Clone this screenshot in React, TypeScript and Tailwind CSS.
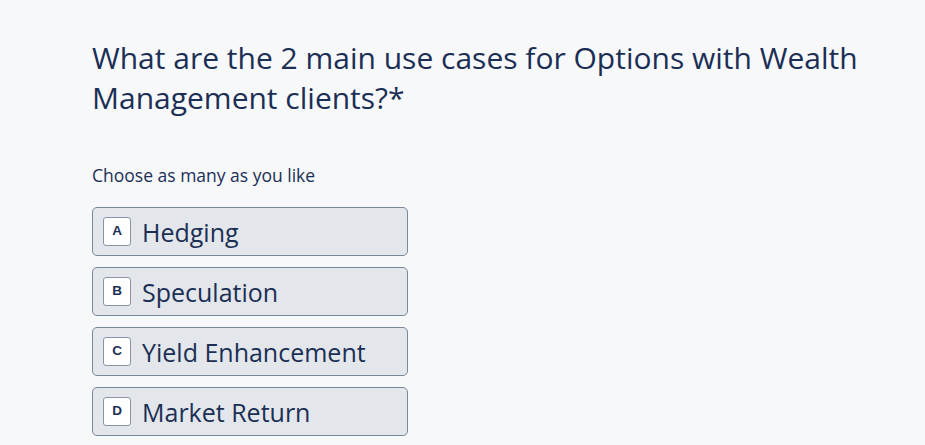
import React from "react";

const options = [
  { key: "A", label: "Hedging" },
  { key: "B", label: "Speculation" },
  { key: "C", label: "Yield Enhancement" },
  { key: "D", label: "Market Return" },
];

export default function App() {
  return (
    <div className="w-[925px] h-[445px] overflow-hidden bg-[#f7f8fa] text-[#1b2f55]" style={{ fontFamily: '"Open Sans", sans-serif' }}>
      <div className="pl-[92px] pr-[40px] pt-[38px]">
        <h1 className="text-[30px] leading-[40px] font-normal">
          What are the 2 main use cases for Options with Wealth Management clients?*
        </h1>
        <p className="mt-[45px] text-[17.5px] leading-[24px]">Choose as many as you like</p>
        <div className="mt-[20px] flex flex-col gap-[11px]">
          {options.map((o) => (
            <div
              key={o.key}
              className="w-[316px] h-[49px] flex items-center gap-[11px] pl-[10px] rounded-[5px] border border-[#7a869a] bg-[#e3e6eb]"
            >
              <div className="w-[28px] h-[29px] flex items-center justify-center rounded-[3px] border border-[#8a94a6] bg-white text-[13.5px] font-bold text-[#1b2f55]" style={{ fontFamily: '"Liberation Sans", sans-serif' }}>
                {o.key}
              </div>
              <span className="text-[25px] leading-[30px]">{o.label}</span>
            </div>
          ))}
        </div>
      </div>
    </div>
  );
}
